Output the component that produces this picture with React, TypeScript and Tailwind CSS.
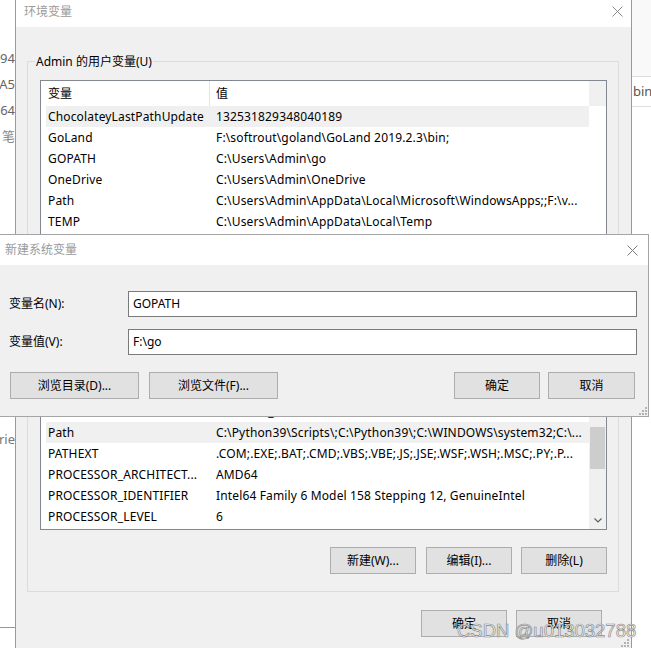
import React from "react";

interface IRow {
    name: string;
    value: string;
    selected?: boolean;
}

const userRows: IRow[] = [
    { name: "ChocolateyLastPathUpdate", value: "132531829348040189", selected: true },
    { name: "GoLand", value: "F:\\softrout\\goland\\GoLand 2019.2.3\\bin;" },
    { name: "GOPATH", value: "C:\\Users\\Admin\\go" },
    { name: "OneDrive", value: "C:\\Users\\Admin\\OneDrive" },
    { name: "Path", value: "C:\\Users\\Admin\\AppData\\Local\\Microsoft\\WindowsApps;;F:\\v..." },
    { name: "TEMP", value: "C:\\Users\\Admin\\AppData\\Local\\Temp" },
    { name: "TMP", value: "C:\\Users\\Admin\\AppData\\Local\\Temp" },
];

const sysRows: IRow[] = [
    { name: "ComSpec", value: "C:\\WINDOWS\\system32\\cmd.exe" },
    { name: "DriverData", value: "C:\\Windows\\System32\\Drivers\\DriverData" },
    { name: "NUMBER_OF_PROCESSORS", value: "12" },
    { name: "OS", value: "Windows_NT" },
    { name: "Path", value: "C:\\Python39\\Scripts\\;C:\\Python39\\;C:\\WINDOWS\\system32;C:\\...", selected: true },
    { name: "PATHEXT", value: ".COM;.EXE;.BAT;.CMD;.VBS;.VBE;.JS;.JSE;.WSF;.WSH;.MSC;.PY;.P..." },
    { name: "PROCESSOR_ARCHITECT...", value: "AMD64" },
    { name: "PROCESSOR_IDENTIFIER", value: "Intel64 Family 6 Model 158 Stepping 12, GenuineIntel" },
    { name: "PROCESSOR_LEVEL", value: "6" },
    { name: "PROCESSOR_REVISION", value: "9e0c" },
];

const CloseX = ({ color }: { color: string }) => (
    <svg width="11" height="11" viewBox="0 0 11 11">
        <path d="M0.5 0.5 L10.5 10.5 M10.5 0.5 L0.5 10.5" stroke={color} strokeWidth="1" fill="none" />
    </svg>
);

const Grip = () => (
    <svg width="8" height="8" viewBox="0 0 8 8" fill="#b4b4b4">
        <rect x="6" y="0" width="2" height="2" />
        <rect x="3" y="3" width="2" height="2" />
        <rect x="6" y="3" width="2" height="2" />
        <rect x="0" y="6" width="2" height="2" />
        <rect x="3" y="6" width="2" height="2" />
        <rect x="6" y="6" width="2" height="2" />
    </svg>
);

const Button = ({ label, w }: { label: string; w: string }) => (
    <div className={`${w} h-[27px] shrink-0 flex items-center justify-center bg-[#e1e1e1] border border-[#adadad] whitespace-nowrap`}>
        {label}
    </div>
);

const ListRow = ({ row }: { row: IRow }) => (
    <div className="flex h-[21px] shrink-0 pl-[5px]">
        <div className={`flex flex-1 min-w-0 leading-[21px] whitespace-nowrap tracking-[0.15px] ${row.selected ? "bg-[#f0f0f0]" : ""}`}>
            <div className="w-[164px] shrink-0 pl-[2px] overflow-hidden">{row.name}</div>
            <div className="flex-1 pl-[6px] overflow-hidden">{row.value}</div>
        </div>
    </div>
);

const ListBox = ({ rows, h, scrollbar }: { rows: IRow[]; h: string; scrollbar: boolean }) => (
    <div className={`flex ${h} border border-[#828790] bg-white overflow-hidden`}>
        <div className="flex-1 min-w-0 flex flex-col">
            <div className="flex h-[25px] shrink-0 pl-[5px] leading-[25px]">
                <div className="w-[164px] shrink-0 pl-[2px] border-r border-[#e5e5e5]">变量</div>
                <div className="flex-1 pl-[6px]">值</div>
            </div>
            {rows.map(r => <ListRow key={r.name + r.value} row={r} />)}
        </div>
        {scrollbar ? (
            <div className="w-[17px] shrink-0 flex flex-col bg-[#f0f0f0]">
                <div className="h-[17px] shrink-0 flex items-center justify-center">
                    <svg width="8" height="5" viewBox="0 0 8 5">
                        <path d="M0.5 4.5 L4 1 L7.5 4.5" stroke="#606060" strokeWidth="1.2" fill="none" />
                    </svg>
                </div>
                <div className="h-[97px] shrink-0" />
                <div className="h-[42px] shrink-0 mx-px bg-[#cdcdcd]" />
                <div className="flex-1" />
                <div className="h-[17px] shrink-0 flex items-center justify-center">
                    <svg width="8" height="5" viewBox="0 0 8 5">
                        <path d="M0.5 0.5 L4 4 L7.5 0.5" stroke="#606060" strokeWidth="1.2" fill="none" />
                    </svg>
                </div>
            </div>
        ) : (
            <div className="w-[17px] shrink-0 flex flex-col">
                <div className="h-[25px] bg-[#f0f0f0]" />
            </div>
        )}
    </div>
);

const GroupBox = ({ label, className, children }: { label: string; className: string; children: React.ReactNode }) => (
    <div className={`relative border border-[#dcdcdc] ${className}`}>
        <div className="absolute -top-[9px] left-[7px] px-[1px] leading-[17px] bg-[#f0f0f0] whitespace-nowrap">{label}</div>
        {children}
    </div>
);

const App = () => (
    <div className="relative w-[651px] h-[648px] overflow-hidden bg-white flex text-[12px] text-black font-['Noto_Sans','Noto_Sans_CJK_SC',sans-serif]">
        {/* window behind, left edge */}
        <div className="w-[15px] shrink-0 flex flex-col overflow-hidden text-[13px] text-[#666]">
            <div className="h-[46px] shrink-0" />
            <div className="h-[26px] shrink-0 flex justify-end items-center whitespace-nowrap">-94</div>
            <div className="h-[26px] shrink-0 flex justify-end items-center whitespace-nowrap">A5</div>
            <div className="h-[26px] shrink-0 flex justify-end items-center whitespace-nowrap">64</div>
            <div className="h-[26px] shrink-0 flex justify-end items-center whitespace-nowrap text-[#888]">笔</div>
            <div className="h-[277px] shrink-0" />
            <div className="h-[26px] shrink-0 flex justify-end items-center whitespace-nowrap text-[#777]">rie</div>
            <div className="h-[175px] shrink-0 border-b border-[#999]" />
        </div>

        {/* 环境变量 dialog */}
        <div className="w-[617px] shrink-0 flex flex-col border-x border-[#9a9a9a]">
            <div className="h-[27px] shrink-0 bg-white flex justify-between pt-[3px] pl-[8px] pr-[8px]">
                <span className="leading-[17px] text-[#9a9a9a]">环境变量</span>
                <div className="pt-[3px]"><CloseX color="#8a8a8a" /></div>
            </div>
            <div className="relative flex-1 bg-[#f0f0f0] flex flex-col">
                <GroupBox label="Admin 的用户变量(U)" className="mt-[34px] ml-[11px] mr-[12px] h-[225px] shrink-0 pt-[18px] pl-[12px] pr-[11px]">
                    <ListBox rows={userRows} h="h-[170px]" scrollbar={false} />
                    <div className="flex justify-end gap-[9px] mt-[17px]">
                        <Button label="新建(N)..." w="w-[86px]" />
                        <Button label="编辑(E)..." w="w-[86px]" />
                        <Button label="删除(D)" w="w-[86px]" />
                    </div>
                </GroupBox>
                <GroupBox label="系统变量(S)" className="mt-[7px] ml-[11px] mr-[12px] shrink-0 pt-[18px] pl-[12px] pr-[11px] pb-[17px]">
                    <ListBox rows={sysRows} h="h-[218px]" scrollbar={true} />
                    <div className="flex justify-end mt-[17px]">
                        <Button label="新建(W)..." w="w-[86px]" />
                        <div className="w-[10px]" />
                        <Button label="编辑(I)..." w="w-[86px]" />
                        <div className="w-[9px]" />
                        <Button label="删除(L)" w="w-[86px]" />
                    </div>
                </GroupBox>
                <div className="flex justify-end gap-[9px] mt-[18px] pr-[29px]">
                    <Button label="确定" w="w-[86px]" />
                    <Button label="取消" w="w-[86px]" />
                </div>
                <div className="absolute right-[2px] bottom-[1px]"><Grip /></div>
            </div>
        </div>

        {/* window behind, right edge */}
        <div className="flex-1 flex flex-col overflow-hidden">
            <div className="h-[77px] shrink-0 bg-[#f9f9f9] border-b border-[#dddddd]" />
            <div className="h-[30px] shrink-0 border-b border-[#dddddd] flex items-center pl-[1px] text-[13px] text-[#555] whitespace-nowrap">bin'</div>
        </div>

        {/* 新建系统变量 dialog */}
        <div className="absolute left-0 top-[234px] w-[649px] h-[183px] flex flex-col border-y border-r border-[#a5a5a5] bg-[#f0f0f0]">
            <div className="h-[30px] shrink-0 bg-white flex items-center justify-between pl-[5px] pr-[10px]">
                <span className="text-[#9a9a9a]">新建系统变量</span>
                <CloseX color="#7a7a7a" />
            </div>
            <div className="flex-1 flex flex-col pt-[26px]">
                <div className="flex items-center h-[26px] pl-[9px] pr-[11px]">
                    <div className="w-[119px] shrink-0">变量名(N):</div>
                    <div className="flex-1 h-full border border-[#7a7a7a] bg-white flex items-center pl-[4px]">GOPATH</div>
                </div>
                <div className="flex items-center h-[26px] mt-[12px] pl-[9px] pr-[11px]">
                    <div className="w-[119px] shrink-0">变量值(V):</div>
                    <div className="flex-1 h-full border border-[#7a7a7a] bg-white flex items-center pl-[4px]">F:\go</div>
                </div>
                <div className="flex items-center mt-[17px] pl-[10px] pr-[13px]">
                    <Button label="浏览目录(D)..." w="w-[129px]" />
                    <div className="w-[10px]" />
                    <Button label="浏览文件(F)..." w="w-[129px]" />
                    <div className="flex-1" />
                    <Button label="确定" w="w-[86px]" />
                    <div className="w-[8px]" />
                    <Button label="取消" w="w-[87px]" />
                </div>
            </div>
            <div className="absolute right-[1px] bottom-[1px]"><Grip /></div>
        </div>

        {/* watermark */}
        <div className="absolute left-[457px] top-[622px] text-[18.5px] leading-none whitespace-nowrap font-['Liberation_Sans',Arial,sans-serif] text-white/80 [-webkit-text-stroke:0.7px_#8a8a8a]">
            CSDN @u013032788
        </div>
    </div>
);

export default App;
